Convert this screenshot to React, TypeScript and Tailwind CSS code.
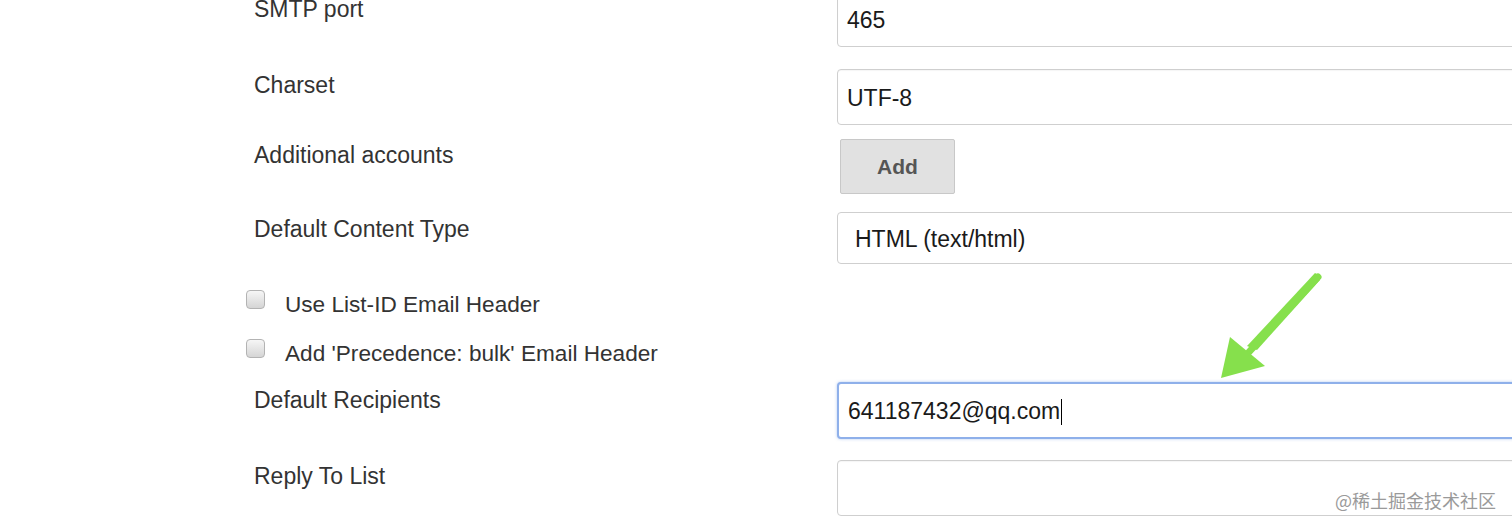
import React from "react";

// Mail notification settings — fragment of a config form
// Label column on the left, controls from x=837 running off the right edge.

const font = "font-['Liberation_Sans',Arial,sans-serif]";

function Field({
  label,
  top,
  labelPad,
  children,
}: {
  label: string;
  top: string;
  labelPad: string;
  children: React.ReactNode;
}) {
  return (
    <div className={`grid grid-cols-[583px_760px] ${top}`}>
      <div className={`${labelPad} text-[23px] leading-[28px] text-[#333]`}>{label}</div>
      <div>{children}</div>
    </div>
  );
}

function TextBox({ value, h }: { value?: string; h: string }) {
  return (
    <div
      className={`${h} flex items-center rounded-[4px] border border-[#cfcfcf] bg-white pl-[9px] pt-[2px] text-[23px] text-[#1a1a1a] shadow-[inset_0_1px_1px_rgba(0,0,0,0.04)]`}
    >
      {value}
    </div>
  );
}

function CheckRow({ label, top }: { label: string; top: string }) {
  return (
    <div className={`ml-[-8px] flex items-start gap-[20px] ${top}`}>
      <span className="block h-[19px] w-[19px] rounded-[4px] border border-[#b3b3b3] bg-gradient-to-b from-[#f6f6f6] to-[#d5d5d5]" />
      <span className="mt-px text-[22.6px] leading-[28px] text-[#333]">{label}</span>
    </div>
  );
}

export default function App() {
  return (
    <div className={`relative h-[531px] w-[1512px] overflow-hidden bg-white ${font}`}>
      <div className="pl-[254px]">
        <Field label="SMTP port" top="mt-[-8px]" labelPad="pt-[3px]">
          <TextBox value="465" h="h-[55px]" />
        </Field>

        <Field label="Charset" top="mt-[22px]" labelPad="pt-[2px]">
          <TextBox value="UTF-8" h="h-[56px]" />
        </Field>

        <Field label="Additional accounts" top="mt-[14px]" labelPad="pt-[2px]">
          <button
            type="button"
            className="ml-[3px] h-[55px] w-[115px] rounded-[2px] border border-[#c8c8c8] bg-[#e1e1e1] text-[21px] font-bold text-[#555]"
          >
            Add
          </button>
        </Field>

        <Field label="Default Content Type" top="mt-[18px]" labelPad="pt-[3px]">
          <div className="flex h-[52px] items-center rounded-[4px] border border-[#cfcfcf] bg-white pl-[17px] pt-[2px] text-[23px] text-[#1a1a1a]">
            HTML (text/html)
          </div>
        </Field>

        <CheckRow label="Use List-ID Email Header" top="mt-[26px]" />
        <CheckRow label="Add 'Precedence: bulk' Email Header" top="mt-[20px]" />

        <Field label="Default Recipients" top="mt-[14px]" labelPad="pt-[4px]">
          <div className="flex h-[57px] items-center rounded-[4px] border-2 border-[#8fb0ea] bg-white pl-[9px] pt-[2px] text-[23px] text-[#1a1a1a] shadow-[0_0_3px_rgba(100,150,230,0.5)]">
            641187432@qq.com
            <span className="ml-px inline-block h-[26px] w-px bg-black" />
          </div>
        </Field>

        <Field label="Reply To List" top="mt-[21px]" labelPad="pt-[2px]">
          <TextBox h="h-[56px]" />
        </Field>
      </div>

      {/* annotation arrow */}
      <svg className="absolute left-[1205px] top-[262px]" width="130" height="130" viewBox="0 0 130 130">
        <path d="M110 11 Q115 13 115 18 L52 88 L42 84 Z" fill="#86e04c" />
        <line x1="113" y1="15" x2="44" y2="90" stroke="#86e04c" strokeWidth="7" strokeLinecap="round" />
        <polygon points="16,116 25,75 60,104" fill="#86e04c" />
      </svg>

      {/* watermark */}
      <div className="absolute left-[1335px] top-[488px] font-['Noto_Sans_CJK_SC',sans-serif] text-[18px] leading-[24px] text-[#9a9a9a]">
        @稀土掘金技术社区
      </div>
    </div>
  );
}
